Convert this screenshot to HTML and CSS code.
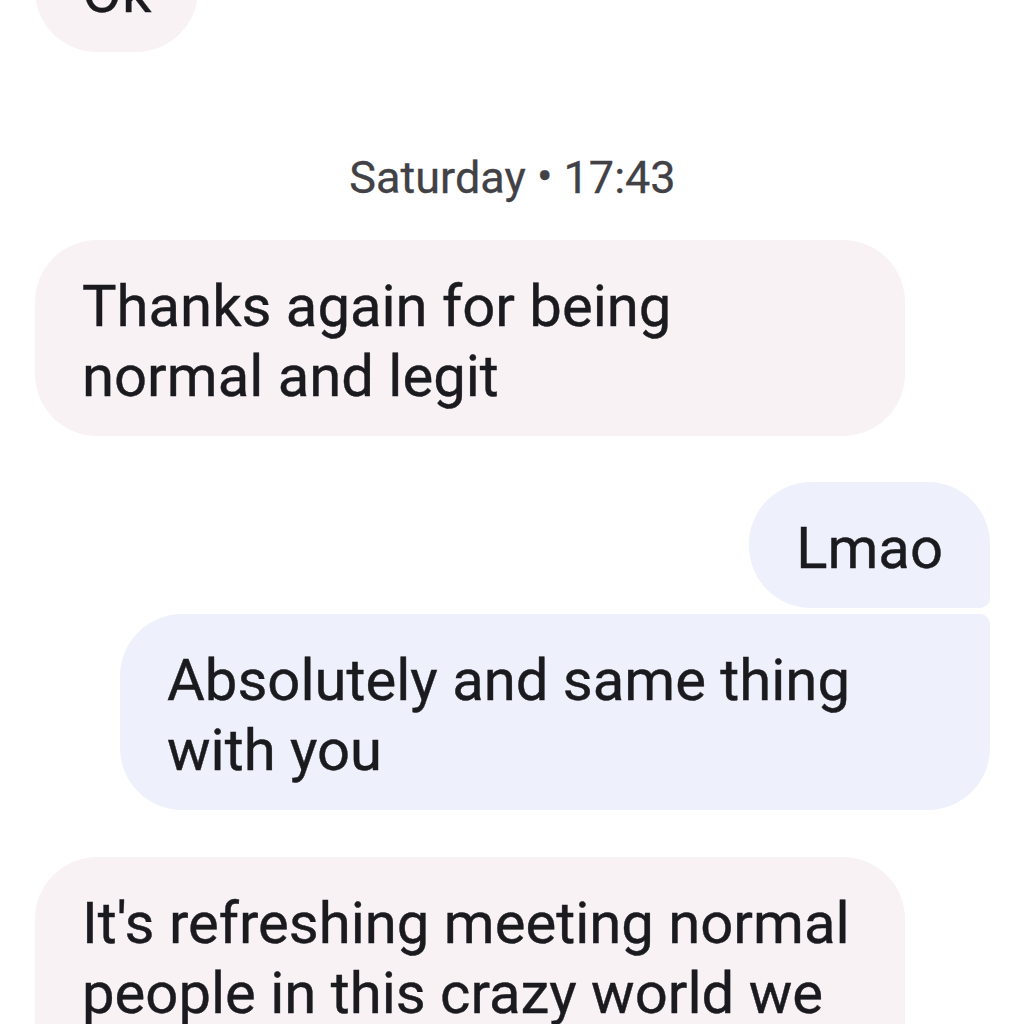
FILE: index.html
```html
<!DOCTYPE html>
<html lang="en">

<head>
    <meta charset="UTF-8">
    <meta name="viewport" content="width=device-width, initial-scale=1.0">
    <title>Messages</title>
    <link rel="stylesheet" href="styles.css">
</head>

<body>
    <div class="thread">
        <div class="bubble incoming first">Ok</div>

        <div class="stamp">Saturday <span class="dot">•</span> 17:43</div>

        <div class="bubble incoming">Thanks again for being normal and legit</div>

        <div class="group">
            <div class="bubble outgoing top">Lmao</div>
            <div class="bubble outgoing bottom">Absolutely and same thing with you</div>
        </div>

        <div class="bubble incoming">It's refreshing meeting normal people in this crazy world we live in</div>
    </div>
</body>

</html>
```

FILE: styles.css
```css
body {
    margin: 0;
    background: #ffffff;
    font-family: Roboto, "Noto Sans", sans-serif;
    color: #1b1b1f;
    overflow: hidden;
}

.thread {
    display: flex;
    flex-direction: column;
    padding: 0 34px 0 35px;
    margin-top: -74px;
}

.bubble {
    max-width: 776px;
    padding: 31px 47px 25px;
    font-size: 58px;
    line-height: 70px;
    border-radius: 62px;
    -webkit-text-stroke: 0.4px #1b1b1f;
}

.incoming {
    align-self: flex-start;
    background: #f8f2f5;
    margin-bottom: 46px;
}

.first {
    margin-bottom: 0;
}

.stamp {
    text-align: center;
    font-size: 45px;
    color: #414146;
    padding: 97px 0 36px;
    -webkit-text-stroke: 0.3px #414146;
}

.dot {
    font-size: 46px;
    vertical-align: 1px;
}

.group {
    display: flex;
    flex-direction: column;
    align-items: flex-end;
    gap: 6px;
    margin-bottom: 47px;
}

.outgoing {
    background: #eef1fb;
}

.outgoing.top {
    border-bottom-right-radius: 10px;
}

.outgoing.bottom {
    border-top-right-radius: 10px;
}
```
